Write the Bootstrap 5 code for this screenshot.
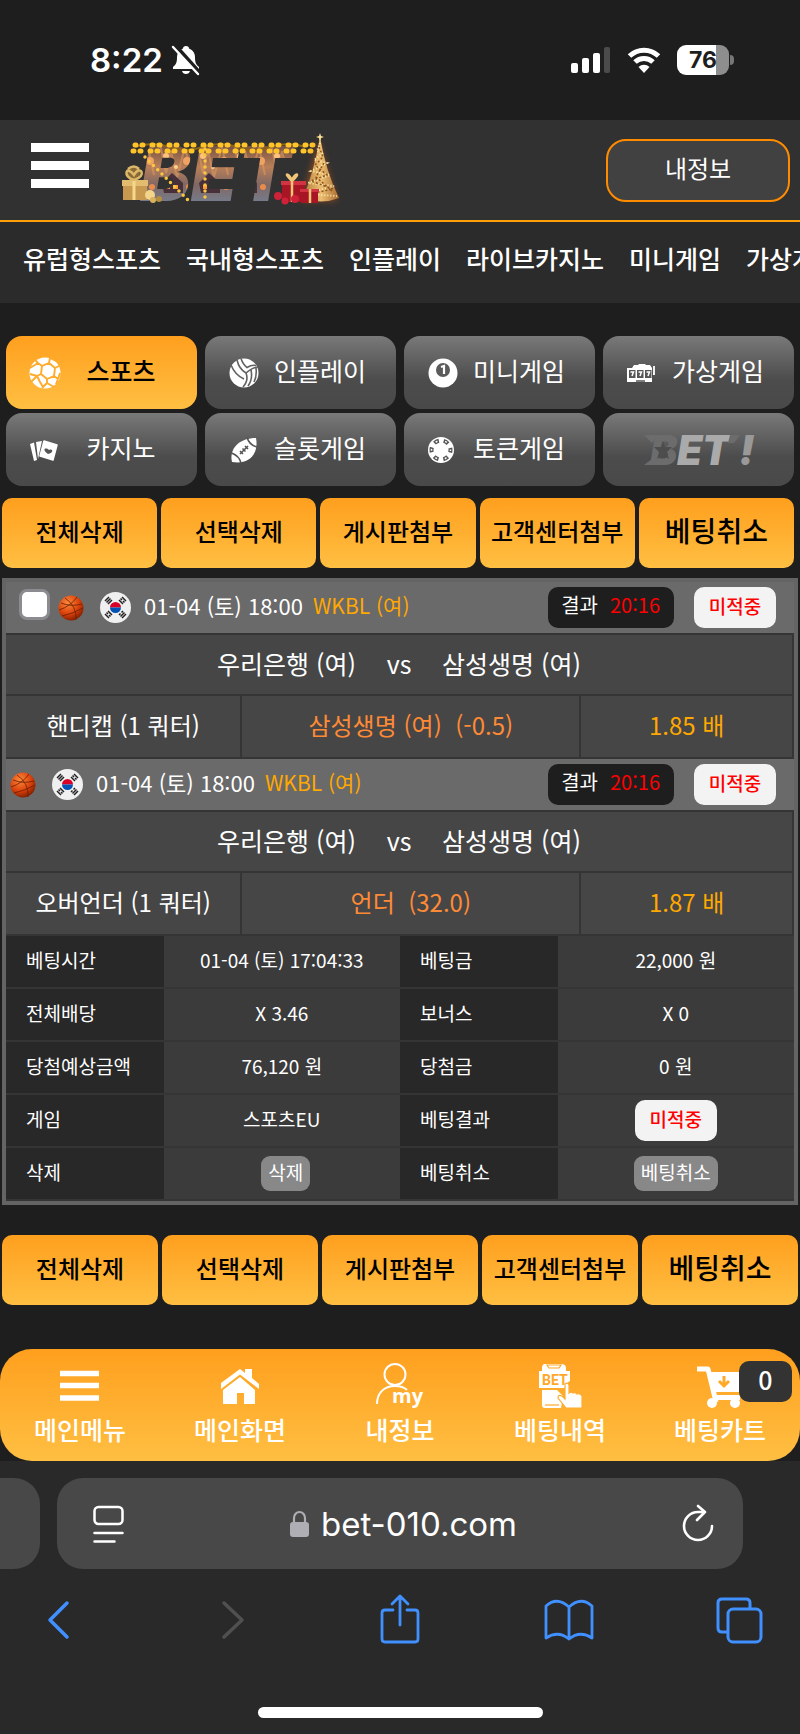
<!DOCTYPE html>
<html lang="ko">
<head>
<meta charset="utf-8">
<meta name="viewport" content="width=device-width, initial-scale=1">
<title>베팅내역</title>
<link href="https://cdn.jsdelivr.net/npm/bootstrap@5.3.0/dist/css/bootstrap.min.css" rel="stylesheet">
<style>
body{background:#1e1e1e;color:#fff;font-family:"Noto Sans CJK KR",sans-serif;font-size:19px;line-height:28px;font-weight:400}
a{color:inherit;text-decoration:none}
svg{display:block;flex:none;overflow:visible}
button{font-family:inherit}
.statusbar{height:120px;padding:0 66px 0 90px;font-family:Inter,sans-serif;font-weight:600;font-size:33px}
.battery{width:52px;height:30px;border-radius:9px;background:linear-gradient(90deg,#fff 75%,#8e8e8e 75%);color:#1e1e1e;font-size:23px;line-height:30px;font-weight:700}
.battery-cap{width:4px;height:10px;margin-left:1px;border-radius:0 5px 5px 0;background:#777}
.site-head{height:102px;background:#313131;border-bottom:2px solid #ffa20a;padding:0 10px 0 31px}
.burger{width:58px;padding:0 0 6px;border:0;background:none}
.btn-info-my{width:184px;height:63px;border:2px solid #ff8c00;border-radius:20px;background:#414141;color:#fff;font-size:24px;line-height:30px;padding-bottom:5px}
.menu-strip{height:81px;background:#2b2b2b;padding:0 0 9px 23px;gap:25px;font-size:25px;line-height:36px;font-weight:500}
.game-tabs{display:grid;grid-template-columns:repeat(4,1fr);gap:4px 8px;padding:33px 6px 0}
.game-tab{height:73px;border:0;border-radius:16px;padding:0 18px 0 21px;background:linear-gradient(#797979,#4c4c4c 60%,#494949);color:#fff;font-size:25px;line-height:36px;display:flex;align-items:center}
.game-tab span{flex:1;text-align:center;white-space:nowrap;padding-bottom:6px}
.game-tab.on{background:linear-gradient(#ff9f1e,#ffbf42);color:#000;font-weight:500}
.acts{display:grid;grid-template-columns:repeat(5,1fr);gap:4px;padding:0 2px}
.acts.top{margin:12px 4px 10px 0}
.acts.bottom{margin-top:30px}
.act{height:70px;border:0;border-radius:10px;background:linear-gradient(#ff9f1e,#ffbf42);color:#000;font-size:24px;line-height:36px;font-weight:500;padding:0 0 4px;white-space:nowrap}
.act.big{font-size:28px;padding-bottom:6px}
.slip{margin:0 2px;border:4px solid #646464}
.line{border-bottom:2px solid #353535}
.game-head{height:53px;background:#6a6a6a;font-size:22px;padding:0 18px 0 4px}
.game-head .txt{padding-bottom:6px}
.game-head .when{margin:0 10px 0 13px}
.game-head .form-check-input{width:31px;height:31px;margin:0 0 6px 9px;border:3px solid #8b8b90;border-radius:8px;background-color:#fff}
.league{font-size:21px}
.league,.odds{color:#ffa800}
.score{height:41px;margin-right:20px;border-radius:10px;background:#1e1e1e;font-size:20px;padding:0 14px 5px 13px;gap:12px}
.score-num{color:#f00}
.miss{height:41px;width:82px;border-radius:10px;background:#f3f3f3;color:#f00;font-size:19px;font-weight:500;padding-bottom:4px;display:flex;align-items:center;justify-content:center}
.teams{height:61px;background:#464646;font-size:25px;display:grid;grid-template-columns:1fr 86px 1fr;align-items:center;text-align:center;border-right:2px solid #353535;padding-bottom:4px}
.pick{display:grid;grid-template-columns:30fr 43fr 27fr;height:63px;background:#464646;font-size:24px;line-height:57px;text-align:center}
.pick>div{border-right:2px solid #353535;white-space:nowrap}
.side{color:#ff8a35}
.detail{width:100%;table-layout:fixed;border-collapse:separate;border-spacing:0}
.detail th,.detail td{height:53px;padding:0 0 4px;border-bottom:2px solid #353535;vertical-align:middle}
.detail th{width:20%;background:#282828;font-weight:400;padding-left:20px}
.detail td{width:30%;background:#3b3b3b;text-align:center}
.btn-mini{height:35px;border:0;border-radius:9px;background:#888;color:#fff;font-size:19px;line-height:28px;padding:0 7px 4px;vertical-align:middle}
.dock{height:112px;margin-top:44px;border-radius:32px;background:linear-gradient(#ff9f1e,#ffbf42);display:grid;grid-template-columns:repeat(5,1fr);font-size:25px;line-height:34px;font-weight:500;text-align:center}
.dock a{display:flex;flex-direction:column;align-items:center;padding-top:13px;position:relative}
.cart-count{position:absolute;right:8px;top:12px;width:53px;height:41px;border-radius:10px;background:#333;line-height:36px}
.browser{background:#292929;padding-top:17px}
.addr{height:91px;border-radius:26px;background:#484848;margin:0 57px 0 17px;padding:0 29px 0 36px;font-family:Inter,sans-serif;font-size:33px;line-height:40px;flex:1}
.prev-tab{width:40px;height:91px;border-radius:0 26px 26px 0;background:#484848}
.tools{padding:26px 37px 0 35px}
.tools button,.addr button{padding:0;border:0;background:none}
.home-bar{width:285px;height:11px;border-radius:6px;background:#fff;margin:64px auto 0}
</style>
</head>
<body>

<svg width="0" height="0" class="position-absolute" aria-hidden="true">
  <defs>
    <radialGradient id="ballFill" cx=".38" cy=".3" r=".75"><stop offset="0" stop-color="#ff8a3c"/><stop offset=".6" stop-color="#d9400a"/><stop offset="1" stop-color="#7a1c00"/></radialGradient>
    <symbol id="basket" viewBox="0 0 26 26"><circle cx="13" cy="13" r="12.500" fill="url(#ballFill)"/><path d="M3 8Q13 12 24 9M7 3Q19 11 18 25M1 15Q13 11 19 2M4 21Q14 19 25 13" fill="none" stroke="#6a1e00" stroke-width=".8"/></symbol>
    <symbol id="korea" viewBox="0 0 31 31"><circle cx="15.500" cy="15.500" r="15.500" fill="#f0f0f0"/><path d="M10 15.500a5.500 5.500 0 0 1 11 0z" fill="#d80027"/><path d="M10 15.500a5.500 5.500 0 0 0 11 0z" fill="#0052b4"/><path d="M5 9l4-4M6.500 10.500l4-4M8 12l4-4M19 8l4 4M20.500 6.500l1.500 1.500M23 9l1.500 1.500M22 5l4 4M5 22l4 4M6.500 20.500l1.500 1.500M9 23l1.500 1.500M8 19l4 4M19 23l1.500-1.500M21.500 20.500l1.500-1.500M22 26l4-4M20.500 24.500l4-4" stroke="#222" stroke-width="1.500"/></symbol>
  </defs>
</svg>

<div class="statusbar d-flex align-items-center">
  <span>8:22</span>
  <svg class="ms-2" width="30" height="30" viewBox="0 0 30 30"><path d="M15 1c2 0 3 1 3 2.500 4 1.500 6 5 6 9 0 5 1 7 4 9.500v2H2v-2c3-2.500 4-4.500 4-9.500 0-4 2-7.500 6-9C12 2 13 1 15 1zM11 26h8c-.5 2-2 3-4 3s-3.500-1-4-3z" fill="#fff"/><path d="M4 0l25 28" stroke="#1e1e1e" stroke-width="4"/><path d="M2 2l25 27" stroke="#fff" stroke-width="2.400" stroke-linecap="round"/></svg>
  <div class="d-flex align-items-center ms-auto">
    <svg width="40" height="26" viewBox="0 0 40 26"><g fill="#fff"><rect y="16" width="7" height="10" rx="2"/><rect x="11" y="11" width="7" height="15" rx="2"/><rect x="22" y="6" width="7" height="20" rx="2"/></g><rect x="33" width="6" height="26" rx="2" fill="#4b4b4b"/></svg>
    <svg class="mx-3" width="34" height="26" viewBox="0 0 34 26"><path d="M2.500 9a21 21 0 0 1 29 0M8 15a13 13 0 0 1 18 0" fill="none" stroke="#fff" stroke-width="5"/><path d="M17 26l-5.500-6a8 8 0 0 1 11 0z" fill="#fff"/></svg>
    <div class="battery text-center">76</div><div class="battery-cap"></div>
  </div>
</div>

<header class="site-head d-flex align-items-center">
  <button class="burger" aria-label="메뉴"><svg width="58" height="60" viewBox="0 0 58 60"><path d="M0 10.500h58M0 28.500h58M0 46.500h58" stroke="#fff" stroke-width="9"/></svg></button>
  <a href="#" class="ms-4 pt-1" aria-label="BET">
    <svg class="ms-2" width="222" height="86" viewBox="0 0 222 86">
      <defs>
        <linearGradient id="night" x1="0" y1="0" x2="0" y2="1"><stop offset="0" stop-color="#6d4c42"/><stop offset=".4" stop-color="#b97f58"/><stop offset=".7" stop-color="#806864"/><stop offset="1" stop-color="#757d8e"/></linearGradient>
        <pattern id="town" y="14" width="37" height="60" patternUnits="userSpaceOnUse"><rect width="37" height="60" fill="url(#night)"/><path d="M2 0l6 30 5-22 6 26 8-30 6 28" stroke="#e09a5f" stroke-width="2" fill="none" opacity=".55"/><path d="M4 40l10-10 11 10v10H6z" fill="#47303a"/><path d="M8 42h4v4H8zM15 42h5v4h-5z" fill="#ff9a38"/><circle cx="29" cy="18" r="4" fill="#efa262"/><circle cx="31" cy="44" r="3" fill="#e98b4a"/><circle cx="8" cy="13" r="3" fill="#ffc37e"/><circle cx="18" cy="24" r="2" fill="#ffcf8e"/></pattern>
        <linearGradient id="fir" x1="0" x2="1"><stop stop-color="#b17a36"/><stop offset=".5" stop-color="#edbe72"/><stop offset="1" stop-color="#a86a30"/></linearGradient>
        <filter id="glow" x="-50%" y="-20%" width="200%" height="140%"><feGaussianBlur stdDeviation="3"/></filter>
      </defs>
      <text x="19" y="72" font-family="Inter, sans-serif" font-weight="900" font-style="italic" font-size="76" fill="url(#town)">BET</text>
      <path d="M14 18Q32 12 48 18T82 18t34 0 34 0 34 0" fill="none" stroke="#8c6417" stroke-width="2"/>
      <path d="M14 16h180M12 22h182" stroke="#ffc42a" stroke-width="5" stroke-linecap="round" stroke-dasharray="1 6 1 9"/>
      <path d="M24 28L68 72M84 20v52" stroke="#f9c63f" stroke-width="3.500" stroke-linecap="round" stroke-dasharray="0 6"/>
      <path d="M198 12L216 72h-36z" fill="#b7551c" filter="url(#glow)" opacity=".6"/>
      <path d="M199 8q6 35 19 61-18 7-36 0 11-26 17-61z" fill="url(#fir)"/>
      <path d="M199 14l-3 8 6 2-9 7 13 3-16 8 19 4-22 8 26 3-28 8 31 2" fill="none" stroke="#fff0b0" stroke-width="2" stroke-dasharray="1 2"/>
      <path d="M198 18l4 10-8 8 12 10-16 6 22 8-28 6M203 34l-8 14 16 14" fill="none" stroke="#8d541e" stroke-width="1.500" stroke-dasharray="2 2"/>
      <path d="M199 4l1 3 3 1-3 1-1 4-1-4-3-1 3-1z" fill="#ffe196"/>
      <path d="M2 54h24v17H2z" fill="#c79a4f"/><path d="M1 51h26v6H1z" fill="#e3bc70"/><path d="M13 51v20" stroke="#f6d88d" stroke-width="3"/><circle cx="12" cy="44" r="7" fill="#8a6a35"/><path d="M13 51c-12-3-8-16 0-5 6-11 14 1 0 5M7 40q6-5 11 0" fill="none" stroke="#dcb869" stroke-width="2.500"/>
      <circle cx="29" cy="66" r="5" fill="#f2d58a"/><circle cx="38" cy="70" r="3" fill="#b88d3b"/><circle cx="32" cy="71" r="3" fill="#d8b25c"/>
      <path d="M161 54h23v19h-23zM180 61h17v13h-17z" fill="#a81524"/><path d="M160 52h25v4h-25zM179 60h19v3h-19z" fill="#d33441"/><path d="M171 52v21M189 60v14M171 52c-9-9-4-8 0-1 4-8 9-7 0 1" fill="none" stroke="#f1c676" stroke-width="2.500"/>
      <g fill="#cf2238"><circle cx="157" cy="67" r="4"/><circle cx="164" cy="72" r="3.500"/><circle cx="174" cy="70" r="4"/></g>
    </svg>
  </a>
  <button class="btn-info-my ms-auto">내정보</button>
</header>

<nav class="menu-strip d-flex align-items-center overflow-hidden text-nowrap">
  <a href="#">유럽형스포츠</a><a href="#">국내형스포츠</a><a href="#">인플레이</a><a href="#">라이브카지노</a><a href="#">미니게임</a><a href="#">가상게임</a>
</nav>

<main>
  <div class="game-tabs">
    <button class="game-tab on">
      <svg width="36" height="36" viewBox="0 0 36 36"><circle cx="18" cy="18" r="15.500" fill="#fff"/><path d="M22 8l6 5-1 8-7 3-6-5 1-8zM22 8l1-5M15 11l-4-3M28 13l4-2M27 21l4 3M20 24v4M14 19l-4 2M11 8L8 5M11 8l-8 5M23 3l6 3M20 28l-5 5M20 28l7 4M10 21l-7-2M10 21l3 6 3 5M10 21l-6 6M31 24l-2 5M31 24l2-6" fill="none" stroke="#ffab2b" stroke-width="1.900"/></svg>
      <span>스포츠</span></button>
    <button class="game-tab">
      <svg width="36" height="36" viewBox="0 0 36 36"><circle cx="18" cy="18" r="14.500" fill="#fff"/><path d="M11 5q2 9 9 13 7-6 12-6M15 3.500q2 6 6 9 5-3 9-2M5 10q4 10 13 14M20 18q3 7-3 14M25 15q2 9-3 16M30 13q1 8-2 14" fill="none" stroke="#616161" stroke-width="1.600"/></svg>
      <span>인플레이</span></button>
    <button class="game-tab">
      <svg width="36" height="36" viewBox="0 0 36 36"><circle cx="18" cy="18" r="14.500" fill="#fff"/><circle cx="18" cy="15" r="7" fill="#5b5b5b"/><path d="M16 12l3-1v8" fill="none" stroke="#fff" stroke-width="2.200"/></svg>
      <span>미니게임</span></button>
    <button class="game-tab">
      <svg width="36" height="36" viewBox="0 0 36 36"><path d="M3 13h5l2-3h4l1-1h6l1 1h4l2 3v14H3z" fill="#fff"/><path d="M29 19h1v-8" stroke="#fff" stroke-width="1.800" fill="none"/><path d="M5 15h6.500v8H5zM13 15h6.500v8H13zM21 15h6.500v8H21z" fill="#565656"/><path d="M6.500 17h3L8 21M14.500 17h3L16 21M22.500 17h3L24 21" fill="none" stroke="#fff" stroke-width="1.500"/><path d="M12 26h9" stroke="#565656" stroke-width="1.500"/></svg>
      <span>가상게임</span></button>
    <button class="game-tab">
      <svg width="36" height="36" viewBox="0 0 36 36"><path d="M3 12l4-1.500 3 17.500-3 1zM9 10l6-1-4 18z" fill="#fff"/><path d="M17 9l13 4-4 15-13-4z" fill="#fff" stroke="#fff" stroke-width="1.500" stroke-linejoin="round"/><path d="M21 22c-7-5-2-7 1-4 4-2 5 3-1 4z" fill="#565656"/></svg>
      <span>카지노</span></button>
    <button class="game-tab">
      <svg width="36" height="36" viewBox="0 0 36 36"><path d="M6 30C3 18 12 6 30 6c3 16-7 27-24 24z" fill="#fff"/><path d="M5.500 21q8 3 9.500 10M21 5q2 8 10 10" fill="none" stroke="#565656" stroke-width="1.600"/><path d="M14 22l8-8M14 19l3 3M16.500 16.500l3 3M19 14l3 3" stroke="#565656" stroke-width="1.600"/></svg>
      <span>슬롯게임</span></button>
    <button class="game-tab">
      <svg width="36" height="36" viewBox="0 0 36 36"><circle cx="16" cy="18" r="13" fill="#fff"/><circle cx="16" cy="18" r="9.500" fill="none" stroke="#555" stroke-width="4" stroke-dasharray="5 4.950" stroke-dashoffset="2.500"/><circle cx="16" cy="18" r="9.500" fill="none" stroke="#fff" stroke-width="1.500" stroke-dasharray="2 7.950" stroke-dashoffset="1"/></svg>
      <span>토큰게임</span></button>
    <button class="game-tab" aria-label="BET!">
      <svg class="mx-auto" width="114" height="36" viewBox="0 0 114 36"><g font-family="Inter, sans-serif" font-weight="900" font-style="italic" font-size="41"><text x="7" y="33" fill="#6c6c6c">B</text><text x="34" y="33" fill="#aaa">E</text><text x="59" y="33" fill="#aaa">T</text><text x="96" y="33" fill="#999">!</text></g><path d="M1 3h14l-6 8zM1 33h12l-4-6zM87 3h10l-6 8h-6z" fill="#6c6c6c"/><path d="M20 9l2 6h7l-5 5 2 7-6-4-6 4 2-7-5-5h7z" fill="#4d4d4d"/></svg>
    </button>
  </div>

  <div class="acts top">
    <button class="act">전체삭제</button><button class="act">선택삭제</button><button class="act">게시판첨부</button><button class="act">고객센터첨부</button><button class="act big">베팅취소</button>
  </div>

  <section class="slip">
    <div class="game-head line d-flex align-items-center">
      <input class="form-check-input" type="checkbox" aria-label="선택">
      <svg class="ms-2 me-3" width="26" height="26"><use href="#basket"/></svg>
      <svg width="31" height="31"><use href="#korea"/></svg>
      <span class="txt when">01-04 (토) 18:00</span>
      <span class="txt league me-auto">WKBL (여)</span>
      <div class="score d-flex align-items-center"><span>결과</span><span class="score-num">20:16</span></div>
      <span class="miss">미적중</span>
    </div>
    <div class="teams line"><span class="text-end">우리은행 (여)</span><span>vs</span><span class="text-start">삼성생명 (여)</span></div>
    <div class="pick line"><div>핸디캡 (1 쿼터)</div><div class="side">삼성생명 (여)&nbsp; (-0.5)</div><div class="odds">1.85 배</div></div>

    <div class="game-head line d-flex align-items-center">
      <svg class="me-3" width="26" height="26"><use href="#basket"/></svg>
      <svg width="31" height="31"><use href="#korea"/></svg>
      <span class="txt when">01-04 (토) 18:00</span>
      <span class="txt league me-auto">WKBL (여)</span>
      <div class="score d-flex align-items-center"><span>결과</span><span class="score-num">20:16</span></div>
      <span class="miss">미적중</span>
    </div>
    <div class="teams line"><span class="text-end">우리은행 (여)</span><span>vs</span><span class="text-start">삼성생명 (여)</span></div>
    <div class="pick line"><div>오버언더 (1 쿼터)</div><div class="side">언더&nbsp; (32.0)</div><div class="odds">1.87 배</div></div>

    <table class="detail">
      <tr><th scope="row">베팅시간</th><td>01-04 (토) 17:04:33</td><th scope="row">베팅금</th><td>22,000 원</td></tr>
      <tr><th scope="row">전체배당</th><td>X 3.46</td><th scope="row">보너스</th><td>X 0</td></tr>
      <tr><th scope="row">당첨예상금액</th><td>76,120 원</td><th scope="row">당첨금</th><td>0 원</td></tr>
      <tr><th scope="row">게임</th><td>스포츠EU</td><th scope="row">베팅결과</th><td class="p-0"><span class="miss mx-auto">미적중</span></td></tr>
      <tr><th scope="row">삭제</th><td class="p-0"><button class="btn-mini ms-2">삭제</button></td><th scope="row">베팅취소</th><td class="p-0"><button class="btn-mini">베팅취소</button></td></tr>
    </table>
  </section>

  <div class="acts bottom">
    <button class="act">전체삭제</button><button class="act">선택삭제</button><button class="act">게시판첨부</button><button class="act">고객센터첨부</button><button class="act big">베팅취소</button>
  </div>
</main>

<nav class="dock">
  <a href="#"><svg width="48" height="50" viewBox="0 0 48 50"><path d="M4 11.500h39M4 23.500h39M4 36h39" stroke="#fff" stroke-width="5.500"/></svg>메인메뉴</a>
  <a href="#"><svg width="48" height="50" viewBox="0 0 48 50"><path d="M5 21L24 7l5 4V7h7v9l7 6v5L24 12.500 5 27z" fill="#fff"/><path d="M7 28l17-13 15 13v14H28V31h-7v11H7z" fill="#fff"/></svg>메인화면</a>
  <a href="#"><svg width="60" height="50" viewBox="0 0 60 50"><circle cx="25" cy="12.500" r="10.500" fill="none" stroke="#fff" stroke-width="2"/><path d="M7 42c0-11 7-18 18-18 5 0 9 1 12 4" fill="none" stroke="#fff" stroke-width="2"/><text x="22" y="41" font-family="Open Sans, sans-serif" font-weight="700" font-size="20" fill="#fff">my</text></svg>내정보</a>
  <a href="#"><svg width="48" height="50" viewBox="0 0 48 50"><path d="M9 2h16q5 0 5 4v3h4v10l-3 2v5H6V6q0-4 3-4zM3 9h6v17H3zM6 28h15l6 6-2 12H9q-3 0-3-3z" fill="#fff"/><path d="M11 3h14l-2 3H13z" stroke="#ffa82a" fill="none" stroke-width="1.200"/><path d="M9 43h14" stroke="#ffa82a" stroke-width="1.200"/><text x="6" y="23" font-family="Roboto, sans-serif" font-weight="700" font-size="14" fill="#ffa82a">BET</text><path d="M29 22q2.500-2 4 1v8q2-2 4 0 2-1 4 1 3-1 5 2v12H30l-8-10q0-4 4-2l3 3z" fill="#fff" stroke="#ffac30" stroke-width="1.200"/></svg>베팅내역</a>
  <a href="#"><svg width="48" height="50" viewBox="0 0 48 50"><path d="M1 7h11l8 33" fill="none" stroke="#fff" stroke-width="5" stroke-linejoin="round"/><path d="M12 10h36l-3 20H17zM17 33h27v5H18z" fill="#fff"/><circle cx="16" cy="41" r="5" fill="#fff"/><circle cx="39" cy="41" r="5" fill="#fff"/><path d="M28 14v9M23 19l5 5 5-5" fill="none" stroke="#ffa82a" stroke-width="3"/></svg>베팅카트<span class="cart-count">0</span></a>
</nav>

<footer class="browser">
  <div class="d-flex">
    <div class="prev-tab"></div>
    <div class="addr d-flex align-items-center justify-content-between">
      <button aria-label="페이지 설정"><svg width="32" height="40" viewBox="0 0 32 40"><g fill="none" stroke="#fff" stroke-width="2.500" stroke-linecap="round"><rect x="1.500" y="3" width="28" height="17" rx="4"/><path d="M1.500 29h28M1.500 37.500h20"/></g></svg></button>
      <div class="d-flex align-items-center"><svg class="me-2" width="23" height="28" viewBox="0 0 23 28"><rect y="12" width="19" height="15" rx="3" fill="#aeaeb4"/><path d="M4 13V8a5.500 6 0 0 1 11 0v5" fill="none" stroke="#aeaeb4" stroke-width="2.200"/></svg>bet-010.com</div>
      <button aria-label="새로고침"><svg width="32" height="40" viewBox="0 0 32 40"><path d="M30 22a14 14 0 1 1-14-14h7M16 2l7 6-8 8" fill="none" stroke="#fff" stroke-width="2.600" stroke-linecap="round" stroke-linejoin="round"/></svg></button>
    </div>
  </div>
  <div class="tools d-flex justify-content-between">
    <button aria-label="뒤로"><svg width="48" height="48" viewBox="0 0 48 48" fill="none" stroke="#4090ff" stroke-width="3.500" stroke-linecap="round" stroke-linejoin="round"><path d="M32 8L15 25l17 17"/></svg></button>
    <button aria-label="앞으로"><svg width="48" height="48" viewBox="0 0 48 48" fill="none" stroke="#505050" stroke-width="3.500" stroke-linecap="round" stroke-linejoin="round"><path d="M19 8l18 17-18 17"/></svg></button>
    <button aria-label="공유"><svg width="48" height="48" viewBox="0 0 48 48" fill="none" stroke="#4090ff" stroke-width="2.800" stroke-linecap="round" stroke-linejoin="round"><path d="M19 15h-8q-3 0-3 3v26q0 3 3 3h30q3 0 3-3V18q0-3-3-3h-8M26 30V2M18 9l8-8 8 8"/></svg></button>
    <button aria-label="책갈피"><svg width="50" height="48" viewBox="0 0 50 48" fill="none" stroke="#4090ff" stroke-width="2.800" stroke-linecap="round" stroke-linejoin="round"><path d="M25 12Q13 1 2 11v32q12-8 23 1 11-9 23-1V11Q37 1 25 12zv32"/></svg></button>
    <button aria-label="탭"><svg width="48" height="48" viewBox="0 0 48 48" fill="none" stroke="#4090ff" stroke-width="3" stroke-linejoin="round"><rect x="13" y="14" width="33" height="33" rx="5"/><path d="M13 37H7q-4 0-4-4V8q0-4 4-4h24q4 0 4 4v6"/></svg></button>
  </div>
  <div class="home-bar"></div>
  <div class="pb-3"></div>
</footer>

<script src="https://cdn.jsdelivr.net/npm/bootstrap@5.3.0/dist/js/bootstrap.bundle.min.js"></script>
</body>
</html>
